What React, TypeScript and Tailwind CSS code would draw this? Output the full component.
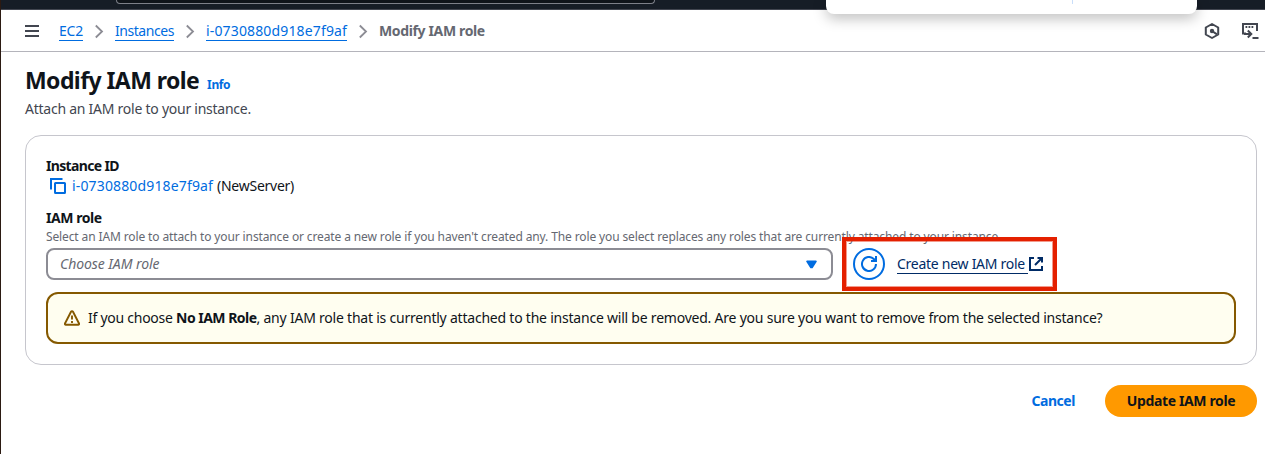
import type { ReactNode } from "react";

function Chevron() {
  return (
    <svg className="h-4 w-4 shrink-0" viewBox="0 0 16 16" fill="none" stroke="#8c8c94" strokeWidth="1.8">
      <path d="M4.8 2.5 11 8.5 4.8 14.5" />
    </svg>
  );
}

function Crumb({ children, className }: { children: ReactNode; className: string }) {
  return (
    <a className={`h-[20px] shrink-0 border-b border-[#006ce0] leading-[19px] text-[#006ce0] ${className}`}>{children}</a>
  );
}

function TopBar() {
  return (
    <div className="relative h-[10px] border-b border-[#424650] bg-[#161d26]">
      <div className="ml-[115px] h-[4px] w-[539px] rounded-b-md border border-t-0 border-[#7d8089] bg-[#0f141a]" />
      <div className="absolute top-0 left-[825px] z-10 flex h-[14px] w-[371px] rounded-b-lg bg-white shadow-[0_4px_14px_rgba(0,0,0,0.28)]">
        <div className="ml-[246px] h-1 w-px bg-[#c9defa]" />
      </div>
    </div>
  );
}

function Breadcrumbs() {
  return (
    <nav className="flex h-[42px] items-center border-b border-[#b4b4bb] pl-6 text-[14px]">
      <svg className="h-4 w-[15px] shrink-0" viewBox="0 0 15 16" stroke="#424650" strokeWidth="2">
        <path d="M0 3h14M0 8h14M0 13h14" />
      </svg>
      <Crumb className="ml-[19px] w-[24px] tracking-[-0.2px]">EC2</Crumb>
      <div className="ml-2 w-[24px]"><Chevron /></div>
      <Crumb className="w-[59px] tracking-[-0.45px]">Instances</Crumb>
      <div className="ml-2 w-[24px]"><Chevron /></div>
      <Crumb className="w-[141px] tracking-[0.15px]">i-0730880d918e7f9af</Crumb>
      <div className="ml-2 w-[24px]"><Chevron /></div>
      <span className="shrink-0 leading-5 font-bold tracking-[-0.36px] text-[#656871]">Modify IAM role</span>
      <div className="mr-[6px] ml-auto flex items-center gap-[20px]">
        <svg className="h-[18px] w-[18px]" viewBox="0 0 18 18" fill="none" stroke="#424650" strokeWidth="2">
          <path d="M9 2 15.200 5.500v7L9 16 2.800 12.500v-7z" strokeLinejoin="round" />
          <path d="M9 9l5 3.400" />
          <circle cx="9" cy="9" r="2.200" fill="#424650" stroke="none" />
        </svg>
        <svg className="h-[18px] w-[18px]" viewBox="0 0 18 18" fill="none" stroke="#424650" strokeWidth="2">
          <path d="M5 11.500H2V2h14v7" />
          <path d="M4.500 5h8" strokeWidth="1.800" strokeDasharray="1.800 1.200" />
          <path d="M3 12h6.500M6.800 8.500l3.500 3.500-3.500 3.500M11.500 16h6" />
        </svg>
      </div>
    </nav>
  );
}

function RoleSelect() {
  return (
    <div className="flex h-8 w-[787px] items-center justify-between rounded-lg border-2 border-[#8c8c94] pr-[14px] pl-3 text-[14px]">
      <span className="tracking-[-0.06px] text-[#656871] italic">Choose IAM role</span>
      <svg className="h-[9px] w-[11px]" viewBox="0 0 11 9" fill="#006ce0">
        <path d="M1 .5h9a.8.8 0 0 1 .7 1.200L6.900 7.800a1 1 0 0 1-.9.500H5a1 1 0 0 1-.9-.500L.3 1.700A.8.8 0 0 1 1 .5z" />
      </svg>
    </div>
  );
}

function CreateRole() {
  return (
    <div className="relative flex items-center pl-5">
      <div className="absolute -top-[11px] left-[9px] z-10 h-[54px] w-[215px] border-[4px] border-[#e42000] shadow-[inset_0_0_0_1px_rgba(228,32,0,0.45)]" />
      <button className="flex h-8 w-8 items-center justify-center rounded-full border-2 border-[#006ce0]">
        <svg className="h-4 w-4" viewBox="0 0 16 16" fill="none" stroke="#006ce0" strokeWidth="2">
          <path d="M15 8a7 7 0 1 1-2.200-5.100L15 5" />
          <path d="M15 0v5h-5" />
        </svg>
      </button>
      <a className="ml-3 h-[20px] w-[131px] border-b border-[#002b66] text-[14px] leading-[19px] tracking-[-0.27px] text-[#002b66]">
        Create new IAM role
      </a>
      <svg className="ml-[1px] h-[14px] w-[14px]" viewBox="0 0 14 14" fill="none" stroke="#002b66" strokeWidth="2">
        <path d="M5 1H1v12h12V9" />
        <path d="M8.500 1H13v4.500M13 1 6 8" />
      </svg>
    </div>
  );
}

function Warning() {
  return (
    <div className="mt-3 flex h-[52px] items-center rounded-xl border-2 border-[#855900] bg-[#fffef0] pl-4 text-[14px] whitespace-pre text-[#0f141a]">
      <svg className="mr-2 h-4 w-4 shrink-0" viewBox="0 0 16 16" fill="none" stroke="#855900" strokeWidth="1.9">
        <path d="M7 1.800a1.100 1.100 0 0 1 2 0l6 11.600a.9.9 0 0 1-.8 1.400H1.800A.9.9 0 0 1 1 13.400z" />
        <path d="M8 5.500v4M8 11v2" />
      </svg>
      <p className="leading-5 tracking-[-0.22px]">
        <span className="tracking-[-0.26px]">If you choose </span>
        <b className="tracking-[-0.52px]">No IAM Role</b>
        , any IAM role that is currently attached to the instance will be removed. Are you sure you want to remove from the selected instance?
      </p>
    </div>
  );
}

export default function App() {
  return (
    <div className="h-[454px] overflow-hidden border-l border-[#2b1a12] bg-white font-['Noto_Sans',sans-serif] whitespace-nowrap">
      <TopBar />
      <Breadcrumbs />
      <main className="pr-2 pl-6">
        <div className="flex items-baseline pt-[13px]">
          <h1 className="text-[23px] leading-[30px] font-bold tracking-[-0.58px] text-[#0f141a]">Modify IAM role</h1>
          <a className="ml-2 text-[12px] leading-4 font-bold tracking-[-0.4px] text-[#006ce0]">Info</a>
        </div>
        <p className="mt-1 text-[14px] leading-5 tracking-[-0.25px] text-[#424650]">Attach an IAM role to your instance.</p>
        <section className="mt-4 h-[230px] rounded-2xl border border-[#c6c6cd] px-5 pt-5 text-[14px] leading-5 text-[#0f141a]">
          <h2 className="font-bold tracking-[-0.65px]">Instance ID</h2>
          <div className="flex items-center pl-1">
            <svg className="mr-[6px] h-4 w-4" viewBox="0 0 16 16" fill="none" stroke="#006ce0" strokeWidth="2">
              <path d="M1 11.500V1h11.500" />
              <rect x="5" y="5" width="10" height="10" rx="0.500" />
            </svg>
            <a className="w-[145px] tracking-[0.15px] text-[#006ce0]">i-0730880d918e7f9af</a>
            <span className="tracking-[-0.25px]">(NewServer)</span>
          </div>
          <h2 className="mt-3 font-bold tracking-[-0.46px]">IAM role</h2>
          <p className="pt-px text-[12px] leading-4 tracking-[-0.122px] text-[#656871]">
            Select an IAM role to attach to your instance or create a new role if you haven't created any. The role you select replaces any roles that are currently attached to your instance.
          </p>
          <div className="mt-[3px] flex">
            <RoleSelect />
            <CreateRole />
          </div>
          <Warning />
        </section>
        <div className="mt-5 flex items-center justify-end text-[14px] font-bold">
          <button className="mr-[30px] pb-px tracking-[-0.45px] text-[#006ce0]">Cancel</button>
          <button className="h-8 w-[152px] rounded-full bg-[#ff9900] pb-px tracking-[-0.37px] text-[#0f141a]">Update IAM role</button>
        </div>
      </main>
    </div>
  );
}
